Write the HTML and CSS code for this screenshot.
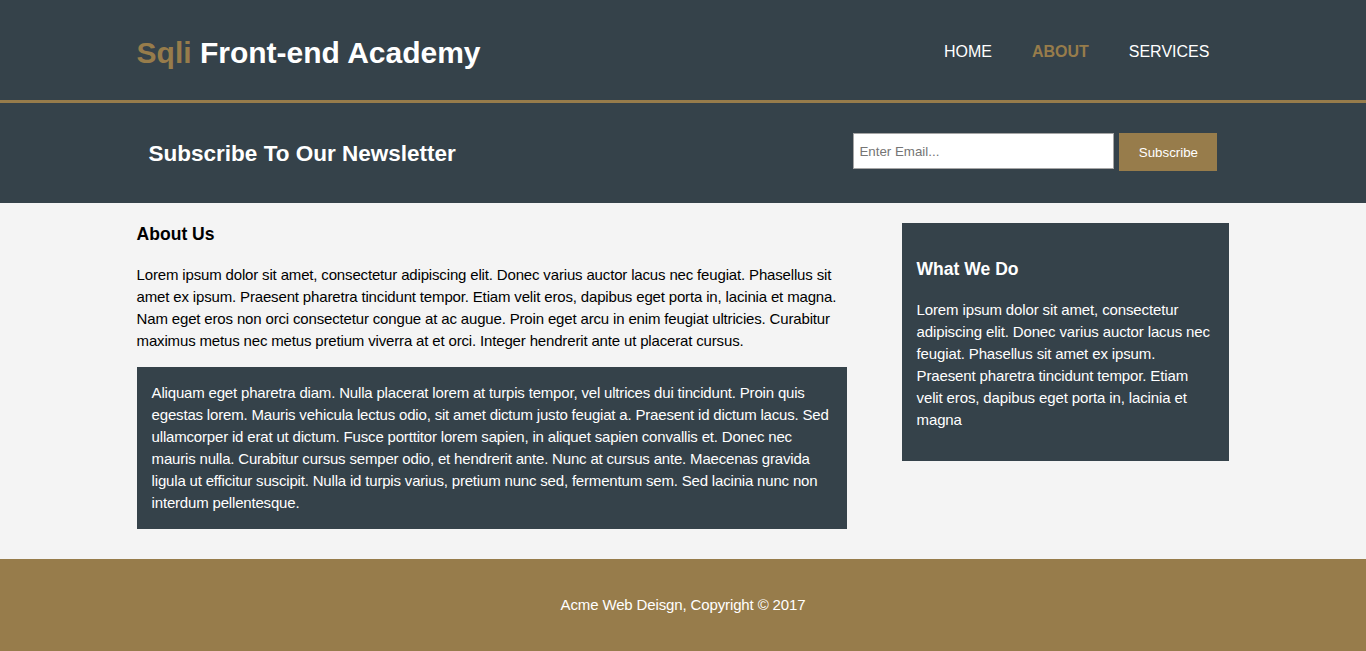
FILE: index.html
```html
<!DOCTYPE html>
<html lang="en">
<head>
<meta charset="utf-8">
<title>Sqli Front-end Academy | About</title>
<link rel="stylesheet" href="styles.css">
</head>
<body>
<header class="site-header">
  <div class="container header-inner">
    <h1 class="branding"><span class="highlight">Sqli</span> Front-end Academy</h1>
    <nav class="main-nav">
      <ul class="nav-list">
        <li><a href="#">Home</a></li>
        <li class="current"><a href="#">About</a></li>
        <li><a href="#">Services</a></li>
      </ul>
    </nav>
  </div>
</header>

<section class="newsletter">
  <div class="container newsletter-inner">
    <h1 class="newsletter-title">Subscribe To Our Newsletter</h1>
    <form class="newsletter-form">
      <input class="email-input" type="email" placeholder="Enter Email...">
      <button class="button-1" type="submit">Subscribe</button>
    </form>
  </div>
</section>

<section class="main">
  <div class="container main-inner">
    <article class="main-col">
      <h1 class="page-title">About Us</h1>
      <p class="text">Lorem ipsum dolor sit amet, consectetur adipiscing elit. Donec varius auctor lacus nec feugiat. Phasellus sit amet ex ipsum. Praesent pharetra tincidunt tempor. Etiam velit eros, dapibus eget porta in, lacinia et magna. Nam eget eros non orci consectetur congue at ac augue. Proin eget arcu in enim feugiat ultricies. Curabitur maximus metus nec metus pretium viverra at et orci. Integer hendrerit ante ut placerat cursus.</p>
      <p class="dark">Aliquam eget pharetra diam. Nulla placerat lorem at turpis tempor, vel ultrices dui tincidunt. Proin quis egestas lorem. Mauris vehicula lectus odio, sit amet dictum justo feugiat a. Praesent id dictum lacus. Sed ullamcorper id erat ut dictum. Fusce porttitor lorem sapien, in aliquet sapien convallis et. Donec nec mauris nulla. Curabitur cursus semper odio, et hendrerit ante. Nunc at cursus ante. Maecenas gravida ligula ut efficitur suscipit. Nulla id turpis varius, pretium nunc sed, fermentum sem. Sed lacinia nunc non interdum pellentesque.</p>
    </article>
    <aside class="sidebar">
      <div class="dark">
        <h3 class="sidebar-title">What We Do</h3>
        <p class="text">Lorem ipsum dolor sit amet, consectetur adipiscing elit. Donec varius auctor lacus nec feugiat. Phasellus sit amet ex ipsum. Praesent pharetra tincidunt tempor. Etiam velit eros, dapibus eget porta in, lacinia et magna</p>
      </div>
    </aside>
  </div>
</section>

<footer class="site-footer">
  <p class="footer-text">Acme Web Deisgn, Copyright &copy; 2017</p>
</footer>
</body>
</html>
```

FILE: styles.css
```css
* {
  box-sizing: border-box;
}

body {
  margin: 0;
  padding: 0;
  background: #f4f4f4;
  font-family: "Liberation Sans", Arial, sans-serif;
  font-size: 15px;
  line-height: 22px;
  color: #000;
}

.container {
  width: 80%;
  margin: 0 auto;
}

/* Header */
.site-header {
  background: #35424a;
  color: #fff;
  padding-top: 30px;
  height: 103px;
  border-bottom: 3px solid #977c4b;
}

.header-inner {
  display: flex;
  justify-content: space-between;
  align-items: flex-start;
}

.branding {
  margin: 0;
  font-size: 30px;
  line-height: 45px;
  font-weight: bold;
}

.highlight {
  color: #977c4b;
}

.main-nav {
  margin-top: 11px;
}

.nav-list {
  display: flex;
  margin: 0;
  padding: 0;
  list-style: none;
}

.nav-list li {
  padding: 0 20px;
}

.nav-list a {
  color: #fff;
  text-decoration: none;
  text-transform: uppercase;
  font-size: 16px;
  line-height: 22px;
}

.nav-list .current a {
  color: #977c4b;
  font-weight: bold;
}

/* Newsletter */
.newsletter {
  background: #35424a;
  color: #fff;
  padding: 15px;
}

.newsletter-inner {
  display: flex;
  justify-content: space-between;
  align-items: flex-start;
}

.newsletter-title {
  margin: 18.5px 0 17.5px;
  font-size: 22.5px;
  line-height: 34px;
  font-weight: bold;
}

.newsletter-form {
  margin-top: 15px;
  display: flex;
  gap: 5px;
  align-items: flex-start;
}

.email-input {
  width: 261px;
  height: 36px;
  padding: 0 5px;
  border: 1px solid #a5a5a5;
  background: #fff;
  font-family: "Liberation Sans", Arial, sans-serif;
  font-size: 13.33px;
  color: #333;
  outline: none;
}

.email-input::placeholder {
  color: #757575;
}

.button-1 {
  height: 38px;
  width: 98px;
  padding: 0;
  border: 0;
  background: #977c4b;
  color: #fff;
  font-family: "Liberation Sans", Arial, sans-serif;
  font-size: 13.33px;
}

/* Main */
.main-inner {
  display: flex;
  justify-content: space-between;
  align-items: flex-start;
}

.main-col {
  width: 65%;
}

.page-title {
  margin: 17.5px 0;
  font-size: 17.55px;
  line-height: 26.3px;
  font-weight: bold;
}

.text {
  margin: 0 0 15px;
  letter-spacing: -0.16px;
}

.dark {
  background: #35424a;
  color: #fff;
  padding: 15px;
  margin: 10px 0;
  letter-spacing: -0.18px;
}

.main-col .dark {
  margin-top: 0;
}

.sidebar {
  width: 30%;
  margin-top: 10px;
}

.sidebar .text {
  letter-spacing: -0.13px;
}

.sidebar-title {
  margin: 17.5px 0;
  font-size: 17.55px;
  line-height: 26.3px;
  font-weight: bold;
  letter-spacing: 0;
}

/* Footer */
.site-footer {
  margin-top: 20px;
  padding: 20px;
  background: #977c4b;
  color: #fff;
  text-align: center;
}

.footer-text {
  margin: 15px 0;
  letter-spacing: -0.13px;
}
```
